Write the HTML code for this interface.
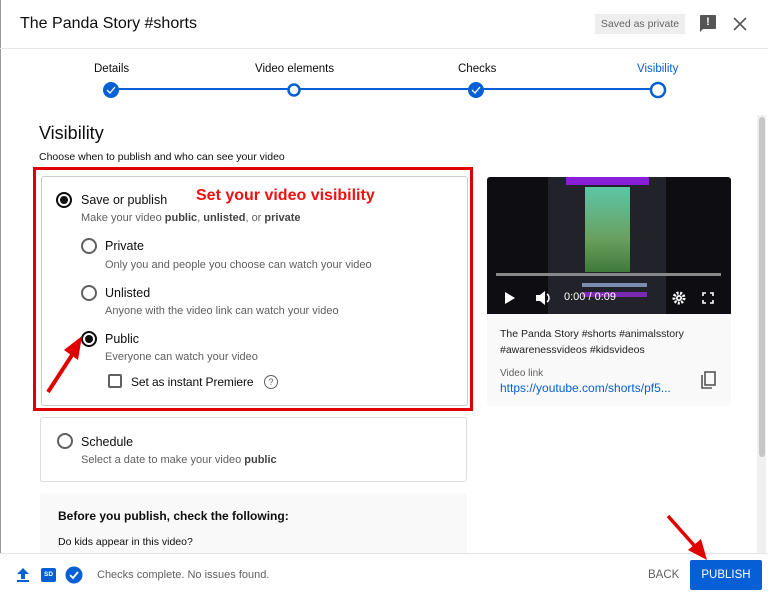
<!DOCTYPE html>
<html><head><style>
*{margin:0;padding:0;box-sizing:border-box}
body{width:768px;height:596px;overflow:hidden;background:#fff;font-family:"Liberation Sans",sans-serif;color:#0d0d0d;position:relative}
.a{position:absolute}
.t{font-size:11px;color:#606060}
.r{position:absolute;width:16px;height:16px;border:2px solid #606060;border-radius:50%}
.r.on{border-color:#0d0d0d}
.r.on::after{content:"";position:absolute;left:2px;top:2px;width:8px;height:8px;border-radius:50%;background:#0d0d0d}
.lbl{font-size:12.5px}
</style></head><body>
<div class="a" style="left:0;top:0;width:1px;height:596px;background:#999"></div>
<div class="a" style="left:20px;top:15px;font-size:16px">The Panda Story #shorts</div>
<div class="a" style="left:595px;top:14px;width:90px;height:20px;background:#eee;font-size:10.5px;color:#666;line-height:20px;text-align:center">Saved as private</div>
<div class="a" style="left:700px;top:15px;width:16px;height:14px;background:#555;border-radius:1px;color:#fff;font-size:11px;font-weight:bold;text-align:center;line-height:14px">!</div>
<div class="a" style="left:700px;top:28px;width:0;height:0;border-top:4px solid #555;border-right:4px solid transparent"></div>
<svg class="a" style="left:733px;top:17px" width="14" height="14"><path d="M1 1L13 13M13 1L1 13" stroke="#555" stroke-width="1.6"/></svg>
<div class="a" style="left:0;top:48px;width:768px;height:1px;background:#e5e5e5"></div>
<div class="a" style="left:94px;top:63px;font-size:11.5px">Details</div>
<div class="a" style="left:255px;top:63px;font-size:11.5px">Video elements</div>
<div class="a" style="left:458px;top:63px;font-size:11.5px">Checks</div>
<div class="a" style="left:637px;top:63px;font-size:11.5px;color:#065fd4">Visibility</div>
<div class="a" style="left:111px;top:88px;width:547px;height:2px;background:#065fd4"></div>
<svg class="a" style="left:101px;top:80px" width="20" height="20"><circle cx="10" cy="10" r="8" fill="#065fd4"/><path d="M6 10l3 3 5-6" stroke="#fff" stroke-width="1.3" fill="none"/></svg>
<svg class="a" style="left:284px;top:80px" width="20" height="20"><circle cx="10" cy="10" r="5.5" fill="#fff" stroke="#065fd4" stroke-width="2.5"/></svg>
<svg class="a" style="left:466px;top:80px" width="20" height="20"><circle cx="10" cy="10" r="8" fill="#065fd4"/><path d="M6 10l3 3 5-6" stroke="#fff" stroke-width="1.3" fill="none"/></svg>
<svg class="a" style="left:648px;top:80px" width="20" height="20"><circle cx="10" cy="10" r="7" fill="#fff" stroke="#065fd4" stroke-width="2.5"/></svg>
<div class="a" style="left:757px;top:115px;width:9px;height:438px;background:#f0f0f0"></div>
<div class="a" style="left:759px;top:117px;width:6px;height:340px;background:#c6c6c6;border-radius:3px"></div>
<div class="a" style="left:39px;top:123px;font-size:18px">Visibility</div>
<div class="a" style="left:39px;top:151px;font-size:10.5px">Choose when to publish and who can see your video</div>
<div class="a" style="left:33px;top:167px;width:440px;height:244px;border:3px solid #e00000"></div>
<div class="a" style="left:41px;top:176px;width:427px;height:230px;border:1px solid #ccc;border-radius:3px"></div>
<div class="r on" style="left:56px;top:192px"></div>
<div class="a lbl" style="left:81px;top:193px">Save or publish</div>
<div class="a" style="left:196px;top:187px;font-size:16px;font-weight:bold;color:#f01010">Set your video visibility</div>
<div class="a t" style="left:81px;top:212px">Make your video <b style="color:#444">public</b>, <b style="color:#444">unlisted</b>, or <b style="color:#444">private</b></div>
<div class="r" style="left:81px;top:238px"></div>
<div class="a lbl" style="left:105px;top:239px">Private</div>
<div class="a t" style="left:105px;top:259px">Only you and people you choose can watch your video</div>
<div class="r" style="left:81px;top:285px"></div>
<div class="a lbl" style="left:105px;top:286px">Unlisted</div>
<div class="a t" style="left:105px;top:305px">Anyone with the video link can watch your video</div>
<div class="r on" style="left:81px;top:331px"></div>
<div class="a lbl" style="left:105px;top:332px">Public</div>
<div class="a t" style="left:105px;top:351px">Everyone can watch your video</div>
<div class="a" style="left:108px;top:374px;width:14px;height:14px;border:2px solid #606060;border-radius:2px"></div>
<div class="a" style="left:131px;top:375px;font-size:12px;letter-spacing:-0.1px">Set as instant Premiere</div>
<div class="a" style="left:264px;top:375px;width:14px;height:14px;border:1.3px solid #606060;border-radius:50%;font-size:9px;text-align:center;line-height:12px;color:#606060">?</div>
<svg class="a" style="left:44px;top:330px" width="45" height="65"><path d="M4 62L30 22" stroke="#e00000" stroke-width="4"/><path d="M38 6L20 20 34 30Z" fill="#e00000"/></svg>
<div class="a" style="left:40px;top:417px;width:427px;height:65px;border:1px solid #ddd;border-radius:3px"></div>
<div class="r" style="left:57px;top:433px"></div>
<div class="a lbl" style="left:81px;top:435px;font-weight:500">Schedule</div>
<div class="a t" style="left:81px;top:454px">Select a date to make your video <b style="color:#444">public</b></div>
<div class="a" style="left:40px;top:493px;width:427px;height:62px;background:#f9f9f9;border-radius:3px"></div>
<div class="a" style="left:58px;top:509px;font-size:12px;font-weight:bold">Before you publish, check the following:</div>
<div class="a" style="left:58px;top:536px;font-size:10.5px">Do kids appear in this video?</div>
<div class="a" style="left:487px;top:177px;width:244px;height:229px;background:#f9f9f9;border-radius:3px"></div>
<div class="a" style="left:487px;top:177px;width:244px;height:137px;background:#0e0e12;border-radius:3px 3px 0 0"></div>
<div class="a" style="left:548px;top:177px;width:118px;height:137px;background:#22232a"></div>
<div class="a" style="left:566px;top:177px;width:83px;height:8px;background:#8a1fd8"></div>
<div class="a" style="left:585px;top:187px;width:45px;height:85px;background:linear-gradient(#5cc6a8,#6aa060 60%,#3f7a3a)"></div>
<div class="a" style="left:496px;top:273px;width:225px;height:3px;background:#888"></div>
<div class="a" style="left:582px;top:283px;width:65px;height:4px;background:#7a8cb0"></div>
<div class="a" style="left:582px;top:292px;width:65px;height:5px;background:#7a2ab0"></div>
<svg class="a" style="left:504px;top:291px" width="12" height="14"><path d="M1 1L11 7 1 13Z" fill="#fff"/></svg>
<svg class="a" style="left:535px;top:290px" width="18" height="16"><path d="M1 5h4l5-4v14l-5-4H1Z" fill="#fff"/><path d="M12 4a5 5 0 010 8" stroke="#fff" stroke-width="1.5" fill="none"/></svg>
<div class="a" style="left:564px;top:291px;font-size:11px;color:#fff">0:00 / 0:09</div>
<svg class="a" style="left:672px;top:291px" width="14" height="14"><circle cx="7" cy="7" r="5" fill="none" stroke="#fff" stroke-width="3" stroke-dasharray="2 1.5"/><circle cx="7" cy="7" r="3" fill="#fff"/><circle cx="7" cy="7" r="1.3" fill="#222"/></svg>
<svg class="a" style="left:702px;top:292px" width="12" height="12"><path d="M1 4V1h3M8 1h3v3M11 8v3H8M4 11H1V8" stroke="#fff" stroke-width="1.6" fill="none"/></svg>
<div class="a" style="left:500px;top:326px;font-size:10.5px;line-height:16px;color:#222">The Panda Story #shorts #animalsstory<br>#awarenessvideos #kidsvideos</div>
<div class="a" style="left:500px;top:368px;font-size:10px;color:#606060">Video link</div>
<div class="a" style="left:500px;top:381px;font-size:12px;color:#065fd4">https://youtube.com/shorts/pf5...</div>
<svg class="a" style="left:699px;top:371px" width="18" height="20"><path d="M3 4v13h10" stroke="#555" stroke-width="1.6" fill="none"/><rect x="6" y="1" width="10" height="13" fill="none" stroke="#555" stroke-width="1.6"/></svg>
<div class="a" style="left:0;top:553px;width:768px;height:43px;background:#fff;border-top:1px solid #e5e5e5"></div>
<svg class="a" style="left:16px;top:567px" width="14" height="16"><path d="M7 1L1 7h4v5h4V7h4Z" fill="#065fd4"/><rect x="1" y="13" width="12" height="2" fill="#065fd4"/></svg>
<div class="a" style="left:41px;top:568px;width:15px;height:14px;background:#065fd4;border-radius:2px;color:#fff;font-size:6.5px;font-weight:bold;text-align:center;line-height:14px">SD</div>
<svg class="a" style="left:65px;top:566px" width="18" height="18"><circle cx="9" cy="9" r="8.5" fill="#065fd4"/><path d="M5 9l3 3 5-6" stroke="#fff" stroke-width="1.8" fill="none"/></svg>
<div class="a" style="left:97px;top:569px;font-size:11px;color:#606060">Checks complete. No issues found.</div>
<div class="a" style="left:648px;top:569px;font-size:11.5px;color:#606060">BACK</div>
<div class="a" style="left:690px;top:560px;width:72px;height:30px;background:#065fd4;border-radius:2px;color:#fff;font-size:11.5px;text-align:center;line-height:30px">PUBLISH</div>
<svg class="a" style="left:660px;top:512px" width="50" height="50"><path d="M8 4L40 40" stroke="#e00000" stroke-width="3.5"/><path d="M47 48L28 38 41 27Z" fill="#e00000"/></svg>
</body></html>
